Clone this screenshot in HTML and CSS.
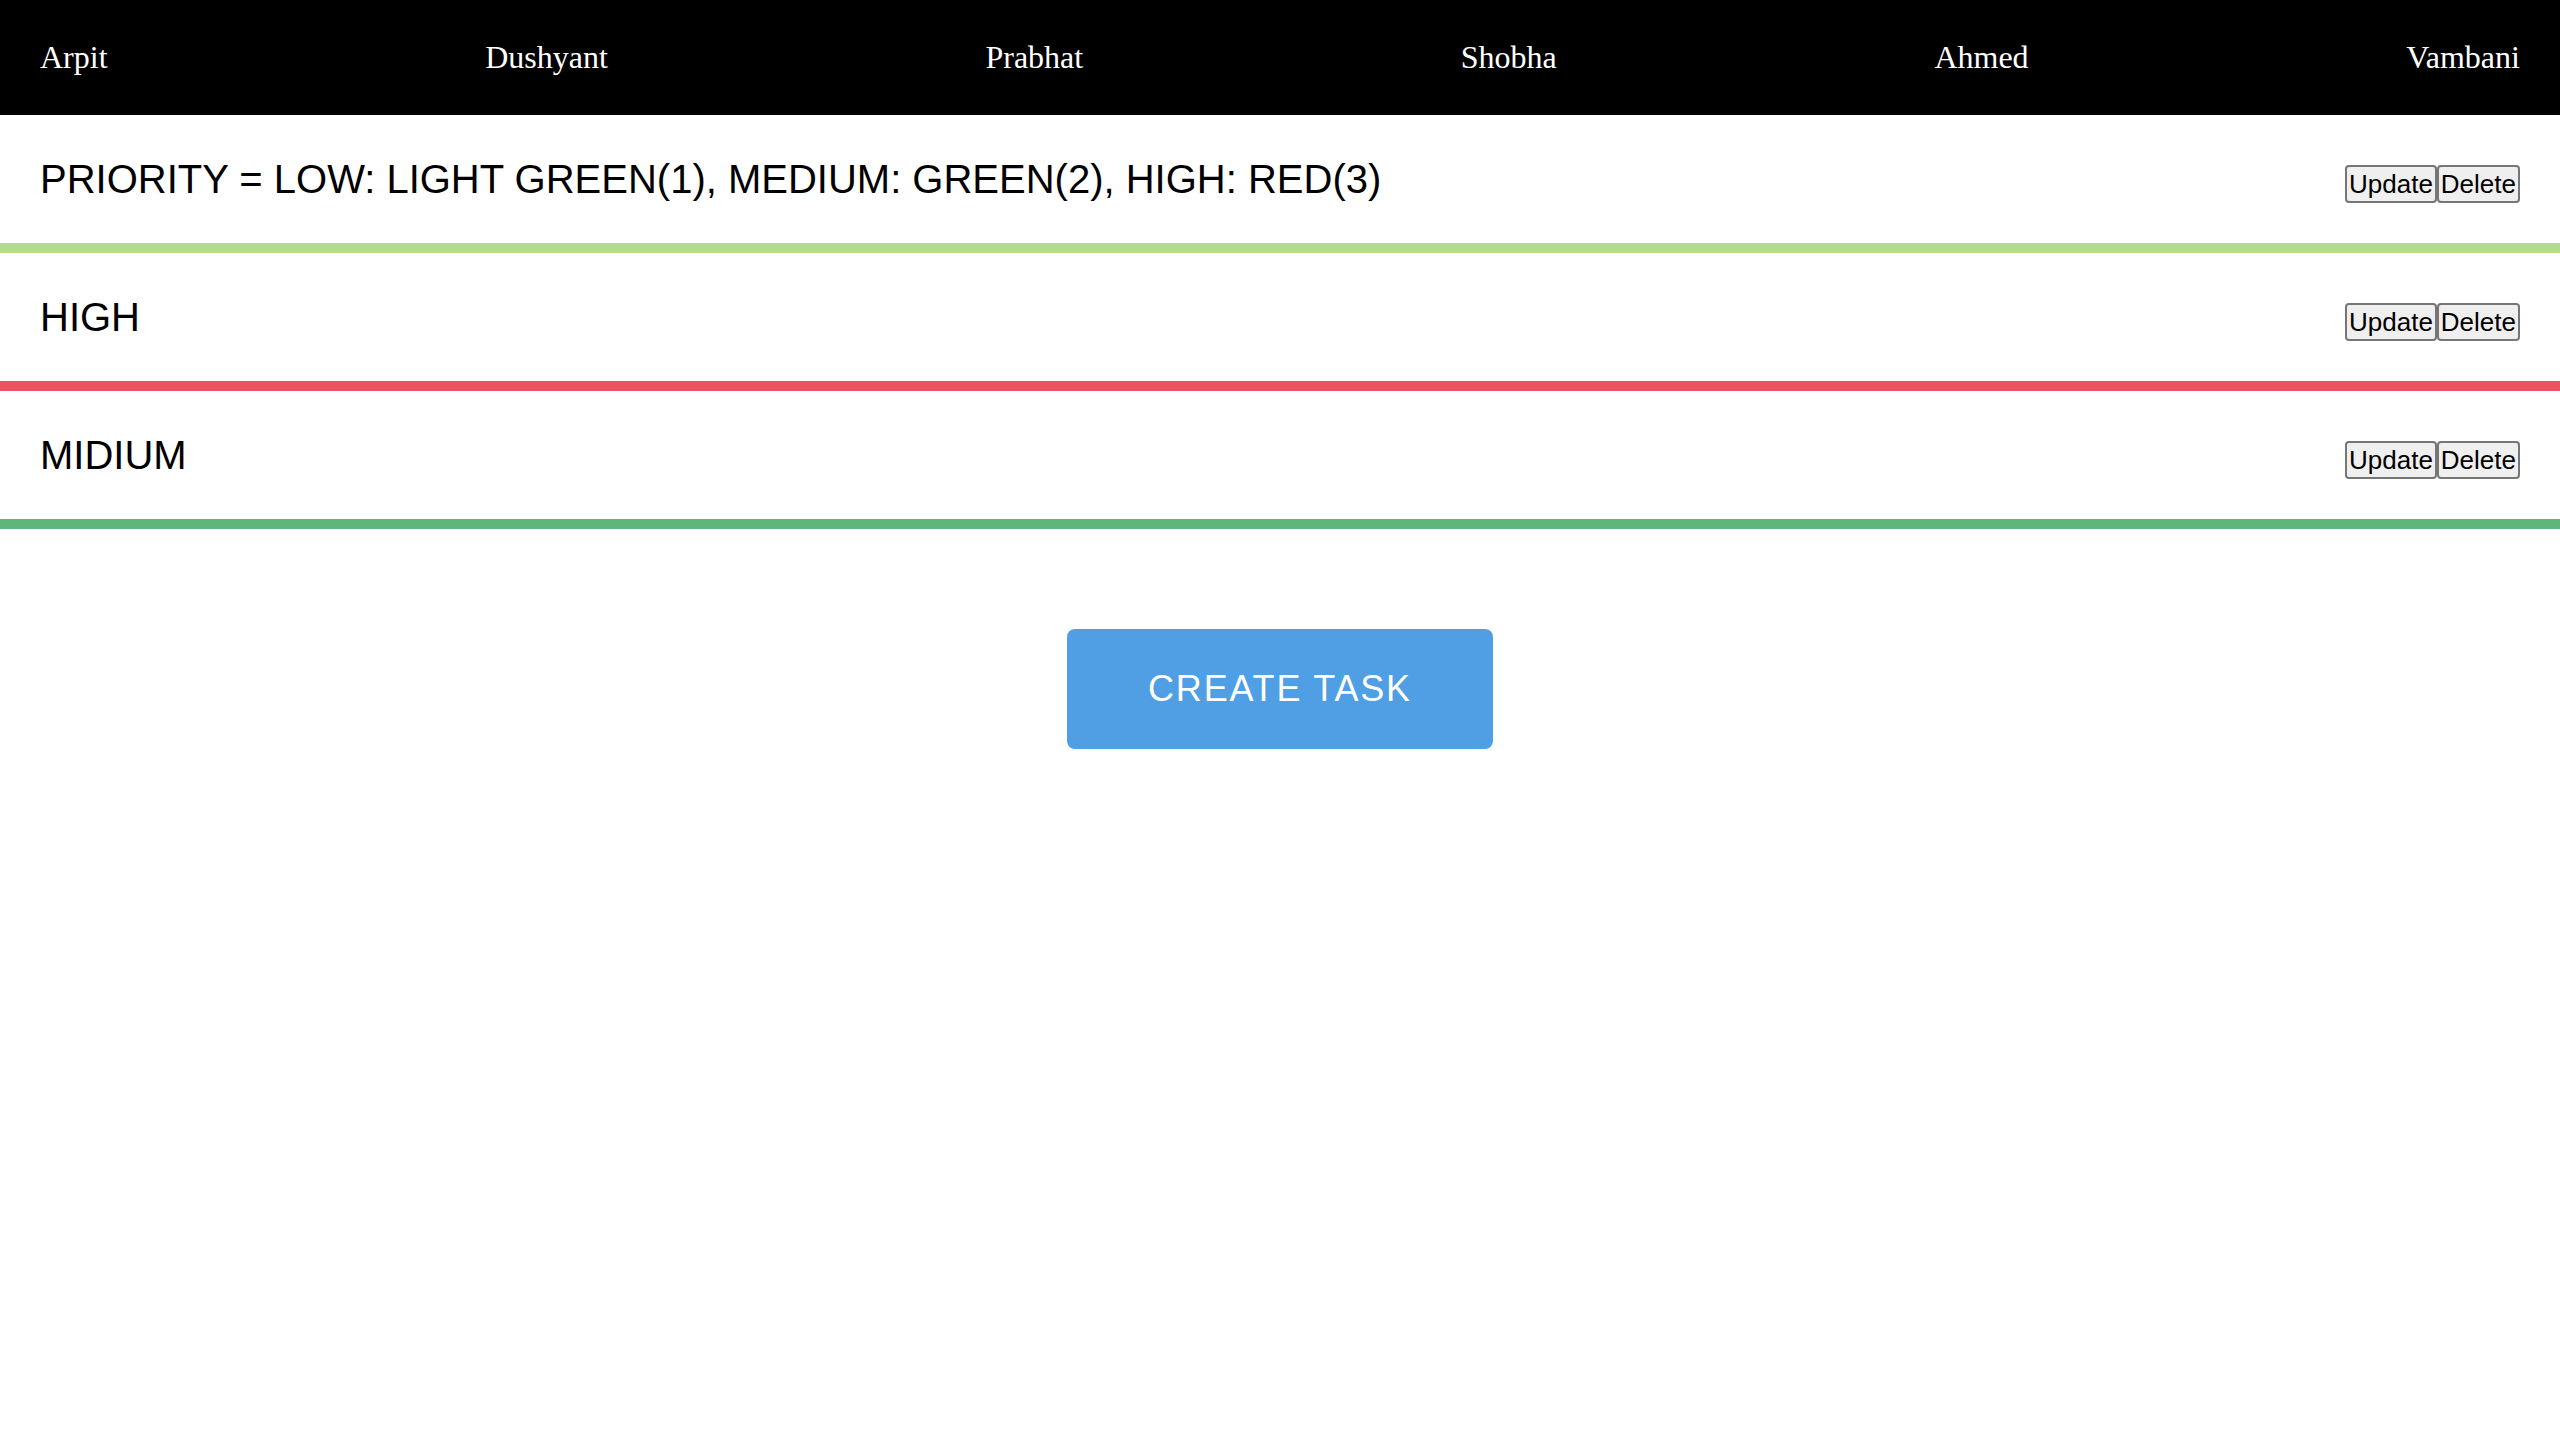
FILE: index.html
```html
<!DOCTYPE html>
<html>
<head>
<meta charset="utf-8">
<link rel="stylesheet" href="styles.css">
</head>
<body>
<nav class="nav">
  <span class="nav-item">Arpit</span>
  <span class="nav-item">Dushyant</span>
  <span class="nav-item">Prabhat</span>
  <span class="nav-item">Shobha</span>
  <span class="nav-item">Ahmed</span>
  <span class="nav-item">Vambani</span>
</nav>
<main class="tasks">
  <div class="task task-low">
    <div class="task-title">PRIORITY = LOW: LIGHT GREEN(1), MEDIUM: GREEN(2), HIGH: RED(3)</div>
    <div class="task-actions"><button class="btn">Update</button><button class="btn">Delete</button></div>
  </div>
  <div class="task task-high">
    <div class="task-title">HIGH</div>
    <div class="task-actions"><button class="btn">Update</button><button class="btn">Delete</button></div>
  </div>
  <div class="task task-medium">
    <div class="task-title">MIDIUM</div>
    <div class="task-actions"><button class="btn">Update</button><button class="btn">Delete</button></div>
  </div>
</main>
<div class="create-wrap">
  <button class="create-btn">CREATE TASK</button>
</div>
</body>
</html>
```
FILE: styles.css
```css
html, body {
  margin: 0;
  padding: 0;
  background: #ffffff;
}

body {
  font-family: "Liberation Serif", "Times New Roman", serif;
}

.nav {
  display: flex;
  justify-content: space-between;
  align-items: center;
  height: 115px;
  padding: 0 40px;
  background: #000000;
}

.nav-item {
  color: #ffffff;
  font-family: "Liberation Serif", "Times New Roman", serif;
  font-size: 32px;
}

.task {
  display: flex;
  justify-content: space-between;
  align-items: baseline;
  height: 46px;
  padding: 41px 40px;
  border-bottom: 10px solid #000;
  font-family: "Liberation Sans", Arial, sans-serif;
}

.task-low { border-bottom-color: #b0dc8c; }
.task-high { border-bottom-color: #e85561; }
.task-medium { border-bottom-color: #5db67a; }

.task-title {
  font-size: 40px;
  line-height: 46px;
  color: #000;
}

.task-actions {
  display: flex;
  align-items: baseline;
}

.btn {
  font-family: "Liberation Sans", Arial, sans-serif;
  font-size: 26px;
  line-height: 30px;
  height: 38px;
  padding: 0 2px;
  margin: 0;
  color: #000;
  background: #efefef;
  border: 2px solid #767676;
  border-radius: 4px;
}

.create-wrap {
  display: flex;
  justify-content: center;
  padding-top: 100px;
}

.create-btn {
  width: 426px;
  height: 120px;
  background: #509ee4;
  color: #ffffff;
  border: none;
  border-radius: 8px;
  font-family: "Liberation Sans", Arial, sans-serif;
  font-size: 36px;
  letter-spacing: 1.8px;
  padding: 0;
}
```
